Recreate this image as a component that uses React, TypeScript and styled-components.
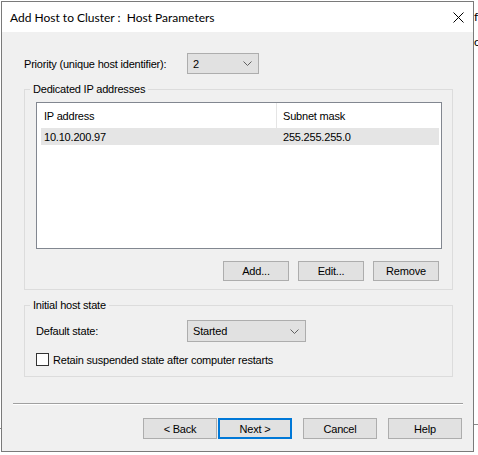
import styled, { createGlobalStyle } from 'styled-components';

const GlobalStyle = createGlobalStyle`
  html, body {
    margin: 0;
    padding: 0;
    background: #ffffff;
  }
  body {
    font-family: "Microsoft Sans Serif", "Liberation Sans", Arial, sans-serif;
    font-size: 11px;
    letter-spacing: -0.2px;
    color: #000;
  }
  * {
    box-sizing: border-box;
  }
`;

const Page = styled.div`
  position: relative;
  width: 478px;
  height: 455px;
  padding: 1px 0 0 1px;
  overflow: hidden;
`;

const BackdropText = styled.span<{ $top: number }>`
  position: absolute;
  left: 474px;
  top: ${({ $top }) => $top}px;
  font-family: "Segoe UI", Lato, sans-serif;
  font-size: 12px;
  letter-spacing: 0;
  line-height: 14px;
  white-space: nowrap;
  color: #000;
`;

const BackdropLine = styled.div<{ $top: number; $left: number; $width: number }>`
  position: absolute;
  top: ${({ $top }) => $top}px;
  left: ${({ $left }) => $left}px;
  width: ${({ $width }) => $width}px;
  height: 1px;
  background: #8a8a8a;
`;

const Window = styled.div`
  position: relative;
  width: 473px;
  height: 451px;
  border: 1px solid #7a7a7a;
  background: #f0f0f0;
  display: flex;
  flex-direction: column;
`;

const TitleBar = styled.div`
  height: 30px;
  background: #ffffff;
  display: flex;
  align-items: center;
  justify-content: space-between;
  padding: 0 9px 0 8px;
`;

const Title = styled.span`
  white-space: pre;
  font-family: "Segoe UI", Lato, sans-serif;
  font-size: 12px;
  letter-spacing: 0;
  color: #000;
`;

const Content = styled.div`
  flex: 1;
  display: flex;
  flex-direction: column;
  padding: 0 10px 0 11px;
`;

const Main = styled.div`
  margin: 0 10px 0 11px;
  display: flex;
  flex-direction: column;
`;

const FieldRow = styled.div<{ $top?: number; $indent?: number }>`
  display: flex;
  align-items: center;
  margin-top: ${({ $top }) => $top ?? 0}px;
  padding-left: ${({ $indent }) => $indent ?? 0}px;
`;

const FieldLabel = styled.span<{ $width: number }>`
  width: ${({ $width }) => $width}px;
  flex-shrink: 0;
  white-space: nowrap;
`;

const Combo = styled.div<{ $width: number; $height: number }>`
  width: ${({ $width }) => $width}px;
  height: ${({ $height }) => $height}px;
  background: #e1e1e1;
  border: 1px solid #adadad;
  display: flex;
  align-items: center;
  justify-content: space-between;
  padding: 0 6px 0 5px;
`;

const Group = styled.div<{ $top: number; $pad: string }>`
  position: relative;
  margin-top: ${({ $top }) => $top}px;
  border: 1px solid #dcdcdc;
  padding: ${({ $pad }) => $pad};
  display: flex;
  flex-direction: column;
`;

const Legend = styled.span`
  position: absolute;
  top: -8px;
  left: 5px;
  padding: 0 3px;
  line-height: 14px;
  background: #f0f0f0;
  white-space: nowrap;
`;

const ListView = styled.div`
  height: 147px;
  border: 1px solid #828790;
  background: #ffffff;
  padding: 0 2px 0 4px;
`;

const ListRow = styled.div<{ $header?: boolean }>`
  display: grid;
  grid-template-columns: 236px 1fr;
  align-items: center;
  height: ${({ $header }) => ($header ? 25 : 17)}px;
  background: ${({ $header }) => ($header ? '#ffffff' : '#e5e5e5')};
`;

const Cell = styled.div<{ $first?: boolean; $divider?: boolean }>`
  height: 100%;
  display: flex;
  align-items: center;
  padding-left: ${({ $first }) => ($first ? 3 : 6)}px;
  border-right: ${({ $divider }) => ($divider ? '1px solid #e5e5e5' : 'none')};
  white-space: nowrap;
`;

const ButtonRow = styled.div<{ $top: number; $gap: number; $right: number }>`
  display: flex;
  justify-content: flex-end;
  margin-top: ${({ $top }) => $top}px;
  padding-right: ${({ $right }) => $right}px;
  gap: ${({ $gap }) => $gap}px;
`;

const Button = styled.button<{ $width: number; $height: number; $default?: boolean }>`
  width: ${({ $width }) => $width}px;
  height: ${({ $height }) => $height}px;
  background: #e1e1e1;
  border: ${({ $default }) => ($default ? '2px solid #0078d7' : '1px solid #adadad')};
  border-radius: 0;
  padding: 0;
  font: inherit;
  letter-spacing: inherit;
  color: #000;
  display: flex;
  align-items: center;
  justify-content: center;
`;

const CheckRow = styled.label`
  display: flex;
  align-items: center;
  margin-top: 11px;
  padding-left: 11px;
  height: 13px;
  gap: 4px;
  white-space: nowrap;
`;

const CheckBox = styled.span`
  width: 13px;
  height: 13px;
  border: 1px solid #333333;
  background: #ffffff;
  flex-shrink: 0;
`;

const Separator = styled.div`
  margin-top: 26px;
  border-top: 1px solid #a0a0a0;
  border-bottom: 1px solid #ffffff;
`;

const Chevron = () => (
  <svg width="9" height="5" viewBox="0 0 9 5">
    <polyline points="0.5,0.5 4.5,4.5 8.5,0.5" fill="none" stroke="#606060" strokeWidth="1" />
  </svg>
);

const CloseIcon = () => (
  <svg width="11" height="11" viewBox="0 0 11 11">
    <path d="M0.5 0.5 L10.5 10.5 M10.5 0.5 L0.5 10.5" stroke="#000" strokeWidth="1" />
  </svg>
);

export default function App() {
  return (
    <>
      <GlobalStyle />
      <Page>
        <BackdropText $top={10}>ft</BackdropText>
        <BackdropText $top={35}>c</BackdropText>
        <BackdropLine $top={424} $left={473} $width={5} />
        <BackdropLine $top={428} $left={0} $width={2} />
        <Window>
          <TitleBar>
            <Title>Add Host to Cluster :  Host Parameters</Title>
            <CloseIcon />
          </TitleBar>
          <Content>
            <Main>
              <FieldRow $top={21}>
                <FieldLabel $width={163}>Priority (unique host identifier):</FieldLabel>
                <Combo $width={72} $height={21}>
                  <span>2</span>
                  <Chevron />
                </Combo>
              </FieldRow>

              <Group $top={15} $pad="12px 10px 8px 11px">
                <Legend>Dedicated IP addresses</Legend>
                <ListView>
                  <ListRow $header>
                    <Cell $first $divider>IP address</Cell>
                    <Cell>Subnet mask</Cell>
                  </ListRow>
                  <ListRow>
                    <Cell $first>10.10.200.97</Cell>
                    <Cell>255.255.255.0</Cell>
                  </ListRow>
                </ListView>
                <ButtonRow $top={12} $gap={9} $right={3}>
                  <Button $width={66} $height={20}>Add...</Button>
                  <Button $width={66} $height={20}>Edit...</Button>
                  <Button $width={66} $height={20}>Remove</Button>
                </ButtonRow>
              </Group>

              <Group $top={15} $pad="14px 10px 10px 0">
                <Legend>Initial host state</Legend>
                <FieldRow $indent={11}>
                  <FieldLabel $width={151}>Default state:</FieldLabel>
                  <Combo $width={119} $height={22}>
                    <span>Started</span>
                    <Chevron />
                  </Combo>
                </FieldRow>
                <CheckRow>
                  <CheckBox />
                  <span>Retain suspended state after computer restarts</span>
                </CheckRow>
              </Group>
            </Main>

            <Separator />

            <ButtonRow $top={13} $gap={0} $right={1}>
              <Button $width={74} $height={21}>&lt; Back</Button>
              <Button $width={74} $height={21} $default style={{ marginLeft: 1 }}>Next &gt;</Button>
              <Button $width={74} $height={21} style={{ marginLeft: 11 }}>Cancel</Button>
              <Button $width={74} $height={21} style={{ marginLeft: 11 }}>Help</Button>
            </ButtonRow>
          </Content>
        </Window>
      </Page>
    </>
  );
}
